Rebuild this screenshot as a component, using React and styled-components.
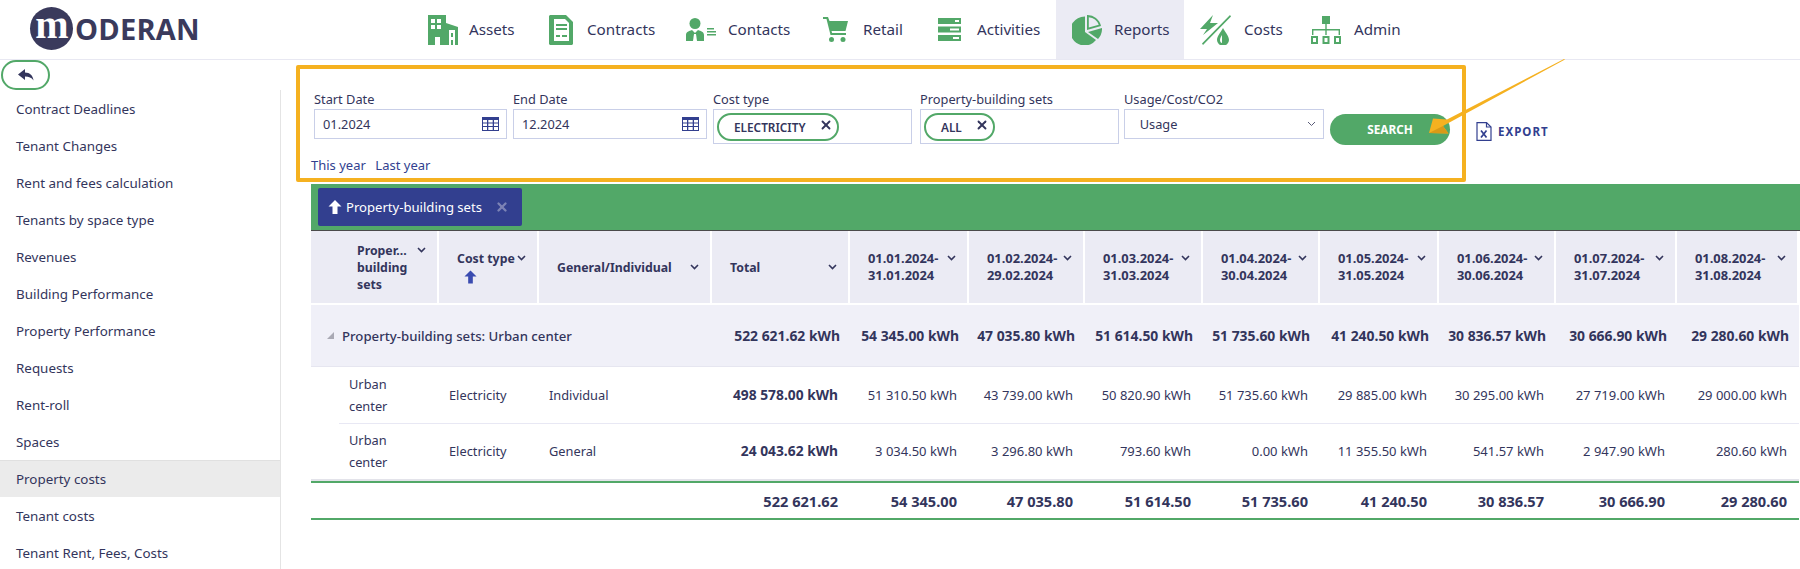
import React from "react";
import styled, { createGlobalStyle } from "styled-components";
import { X } from "lucide-react";

const INK = "#33355c";
const GREEN = "#52a868";
const INDIGO = "#323f8f";
const ORANGE = "#f5b120";
const LINE = "#c9cfe8";
const TRACKS = "28px 100px 100px 173px 138px 119px 116px 118px 117px 119px 117px 121px 122px";

const Global = createGlobalStyle`
  html, body { margin: 0; padding: 0; background: #fff; }
  body { font-family: "Noto Sans", "Open Sans", sans-serif; color: ${INK}; font-size: 13px; }
  * { box-sizing: border-box; }
`;

const Page = styled.div`
  position: relative;
  width: 1800px;
  height: 569px;
  overflow: hidden;
`;

/* header */
const Header = styled.header`
  display: flex;
  height: 60px;
  border-bottom: 1px solid #e8e8f2;
`;
const Brand = styled.div`
  width: 412px;
  display: flex;
  align-items: flex-start;
  padding: 7px 0 0 30px;
`;
const BrandMark = styled.span`
  width: 43px;
  height: 43px;
  border-radius: 50%;
  background: #3a3a5c;
  color: #fff;
  font: 700 40px/36px "Liberation Serif", serif;
  display: flex;
  justify-content: center;
  letter-spacing: -1px;
`;
const BrandWord = styled.span`
  font: 700 29px/43px "Open Sans", sans-serif;
  color: #3a3a5c;
  margin-left: 2px;
  letter-spacing: 0.2px;
`;
const Nav = styled.nav`
  display: flex;
`;
const NavItem = styled.a`
  width: ${(p) => p.$width}px;
  display: flex;
  align-items: center;
  padding-left: 16px;
  font-size: 15.2px;
  background: ${(p) => (p.$active ? "#ebebf4" : "transparent")};
  & > span { margin-bottom: 2px; }
`;
const NavIcon = styled.svg`
  display: block;
  flex: none;
  margin-right: ${(p) => p.$gap}px;
  fill: ${GREEN};
`;

/* sidebar */
const Body = styled.div`
  display: flex;
  height: 509px;
`;
const Sidebar = styled.aside`
  width: 281px;
  flex: none;
  overflow: hidden;
`;
const BackButton = styled.button`
  display: flex;
  align-items: center;
  justify-content: center;
  width: 49px;
  height: 30px;
  margin-left: 1px;
  padding: 0;
  background: #fff;
  border: 2px solid ${GREEN};
  border-radius: 15px;
`;
const SideList = styled.ul`
  list-style: none;
  margin: 0;
  padding: 0;
  border-right: 1px solid #e4e4e4;
`;
const SideItem = styled.li`
  height: 37px;
  line-height: 38px;
  padding-left: 16px;
  font-size: 13.4px;
  background: ${(p) => (p.$active ? "#ebebeb" : "transparent")};
  box-shadow: ${(p) => (p.$active ? "inset 0 1px 0 #e0e0e0" : "none")};
`;

/* filters */
const Content = styled.main`
  flex: 1;
  min-width: 0;
`;
const TopRow = styled.div`
  display: flex;
  align-items: flex-start;
  margin: 5px 0 0 15px;
`;
const FilterPanel = styled.section`
  width: 1170px;
  height: 117px;
  border: 4px solid ${ORANGE};
  border-radius: 2px;
  padding: 22px 0 0 11px;
`;
const Fields = styled.div`
  display: flex;
  align-items: flex-start;
  margin-left: 3px;
`;
const Field = styled.div`
  width: ${(p) => p.$width}px;
  margin-right: ${(p) => p.$gap}px;
`;
const Label = styled.label`
  display: block;
  height: 17.5px;
  line-height: 17px;
  font-size: 12.8px;
  white-space: nowrap;
`;
const InputBox = styled.div`
  height: ${(p) => p.$height}px;
  border: 1px solid ${LINE};
  display: flex;
  align-items: ${(p) => (p.$top ? "flex-start" : "center")};
  justify-content: space-between;
  padding: ${(p) => (p.$top ? "3px" : "0 7px 0 8px")};
  font-size: 12.8px;
`;
const Chip = styled.span`
  height: 28px;
  width: ${(p) => p.$width}px;
  border: 2px solid ${GREEN};
  border-radius: 14px;
  display: inline-flex;
  align-items: center;
  justify-content: space-between;
  padding: 0 4px 0 15px;
  font-size: 11.8px;
  font-weight: 600;
  & svg { margin-bottom: 4px; }
`;
const SearchButton = styled.button`
  width: 120px;
  height: 31px;
  margin-top: 22.5px;
  border: 0;
  border-radius: 16px;
  background: ${GREEN};
  color: #fff;
  font: 700 11.8px "Noto Sans", sans-serif;
  padding: 0;
`;
const QuickLinks = styled.div`
  display: flex;
  gap: 9.500px;
  margin-top: 12px;
  line-height: 17px;
  font-size: 13px;
  color: ${INDIGO};
`;
const Export = styled.a`
  display: flex;
  align-items: center;
  gap: 6px;
  margin: 57px 0 0 10px;
  font-size: 11.5px;
  font-weight: 700;
  letter-spacing: 1px;
  color: ${INDIGO};
`;

/* grouping bar */
const GroupBar = styled.div`
  margin: 2px 0 0 30px;
  height: 46px;
  background: ${GREEN};
  padding: 4px 7px;
`;
const GroupTag = styled.div`
  width: 204px;
  height: 38px;
  background: ${INDIGO};
  border-radius: 2px;
  display: flex;
  align-items: center;
  padding-left: 10px;
  color: #fff;
  font-size: 13.1px;
  & b { margin-left: 13px; color: #7c83b5; display: flex; }
  & span { margin-left: 4px; }
`;

/* table */
const Table = styled.div`
  margin-left: 30px;
  border-top: 1px solid #4a4a4a;
`;
const Row = styled.div`
  display: grid;
  grid-template-columns: ${TRACKS};
  height: ${(p) => p.$height}px;
  padding-bottom: ${(p) => p.$lift ?? 0}px;
`;
const HeadCell = styled.div`
  background: #ebebf4;
  border-right: 2px solid #fff;
  border-bottom: 2px solid #fff;
  padding: 0 11px 0 18px;
  display: flex;
  align-items: center;
  font-weight: 700;
  font-size: 12.3px;
  line-height: 17px;
`;
const HeadInner = styled.div`
  flex: 1;
  display: flex;
  justify-content: space-between;
  align-items: flex-start;
`;
const DateText = styled.div`
  font-size: 12.9px;
`;
const Chevron = styled.svg`
  flex: none;
  margin-top: 5px;
  margin-left: -20px;
`;
const SortArrow = styled.svg`
  display: block;
  margin: 3px 0 0 7px;
`;
const GroupRow = styled(Row)`
  background: #f0f0f8;
  border-bottom: 1px solid #e6e6f0;
  font-weight: 700;
  margin-right: 1px;
  font-size: 13.9px;
`;
const GroupTitle = styled.div`
  grid-column: span 4;
  display: flex;
  align-items: center;
  font-weight: 500;
  padding-left: 16px;
  gap: 8px;
  font-size: 13.2px;
`;
const GroupValue = styled.div`
  display: flex;
  align-items: center;
  justify-content: flex-end;
  padding-right: 10px;
  white-space: nowrap;
`;
const Cell = styled.div`
  display: flex;
  align-items: center;
  justify-content: ${(p) => (p.$right ? "flex-end" : "flex-start")};
  padding: ${(p) => (p.$right ? "0 12px 0 0" : "0 0 0 10px")};
  border-bottom: ${(p) => (p.$line ? "1px solid #e8e8f4" : "0")};
  font-weight: ${(p) => (p.$bold ? 700 : 400)};
  white-space: nowrap;
  font-size: ${(p) => (p.$bold ? "13.8px" : p.$right ? "13px" : "12.8px")};
  line-height: 22px;
`;
const Spacer = styled.div``;
const FootRow = styled(Row)`
  border-top: 2px solid ${GREEN};
  border-bottom: 2px solid ${GREEN};
  box-shadow: 0 -2px 0 #e3e3ea;
  font-weight: 700;
  font-size: 14.6px;
  margin-right: 1px;
`;
const FootValue = styled.div`
  display: flex;
  align-items: center;
  justify-content: flex-end;
  padding-right: 12px;
`;

const ArrowOverlay = styled.svg`
  position: absolute;
  left: 1420px;
  top: 50px;
  pointer-events: none;
`;

/* icons */
const AssetsIcon = () => (
  <NavIcon $gap={11} width="30" height="30" viewBox="0 0 30 30">
    <path d="M0 0h18v8l12 4v18H0z" />
    <path fill="#fff" d="M3 4h4v4H3zM9 4h4v4H9zM3 10h4v4H3zM9 10h4v4H9zM7 22h5v8H7zM21 15h6v15h-2v-5h-2v5h-2zM23 18v4h2v-4z" />
  </NavIcon>
);
const ContractsIcon = () => (
  <NavIcon $gap={14} width="24" height="30" viewBox="0 0 24 30">
    <path d="M1 0h16l7 7v22l-1 1H1l-1-1V1z" />
    <path fill="#fff" d="M5 4h11l4 4v18H5z" />
    <path d="M7 9h11v2H7zM7 13h11v2H7zM7 20h4v2H7zM13 20h5v2h-5z" />
  </NavIcon>
);
const ContactsIcon = () => (
  <NavIcon $gap={12} width="30" height="24" viewBox="0 0 30 24">
    <circle cx="9" cy="5.5" r="5.5" />
    <path d="M0 23v-6c0-3 3-4 6-5l3 3 3-3c3 1 6 2 6 5v6z" />
    <path fill="#fff" d="M8 16h2l1 7H7z" />
    <path d="M21 10h7v1.6h-7zM21 13h9v1.6h-9zM21 16h9v1.6h-9z" />
  </NavIcon>
);
const RetailIcon = () => (
  <NavIcon $gap={15} width="25" height="25" viewBox="0 0 25 25">
    <path d="M0 0h5l1.500 4H25l-2.500 10H8.500l.6 2H23v2H7.500L3.500 2H0z" />
    <circle cx="8.500" cy="22.500" r="2.500" />
    <circle cx="20" cy="22.500" r="2.500" />
  </NavIcon>
);
const ActivitiesIcon = () => (
  <NavIcon $gap={16} width="23" height="23" viewBox="0 0 23 23">
    <path d="M0 0h23v6H0zM0 8.500h23v6H0zM0 17h23v6H0z" />
    <path fill="#fff" d="M17 2h4v2h-4zM12 10.500h9v2h-9zM15 19h6v2h-6z" />
  </NavIcon>
);
const ReportsIcon = () => (
  <NavIcon $gap={12} width="30" height="30" viewBox="0 0 30 30">
    <path d="M13 1.500A14.500 14.500 0 1 0 24 25L13 17z" />
    <path d="M15 0a14 14 0 0 1 14 11l-14 4zM16.800 2.200v10.400l10-2.800a12 12 0 0 0-10-7.600z" fillRule="evenodd" />
    <path d="M16 17l14-4a15 15 0 0 1-4 11z" />
  </NavIcon>
);
const CostsIcon = () => (
  <NavIcon $gap={13} width="31" height="30" viewBox="0 0 31 30">
    <path d="M13 0L0 14h7L3 20l15-12h-8zM30 0l1 1.500L3 30l-1-1.500z" />
    <path d="M23 13c2 4 6 8 6 12a6 5.500 0 0 1-12 0c0-4 4-8 6-12z" />
    <path fill="#fff" d="M20 25c0-2 1-3 2-5v8c-1 0-2-1-2-3z" />
  </NavIcon>
);
const AdminIcon = () => (
  <NavIcon $gap={13} width="30" height="28" viewBox="0 0 30 28">
    <path d="M11 0h8v8h-8zM14.300 8h1.400v5H29v6h-1.400v-4.600H15.700V19h-1.400v-4.600H2.400V19H1v-6h13.300z" />
    <path fillRule="evenodd" d="M0 20h7v8H0zM2 22v4h3v-4zM11.500 20h7v8h-7zM13.500 22v4h3v-4zM23 20h7v8h-7zM25 22v4h3v-4z" />
  </NavIcon>
);

const CalendarIcon = () => (
  <svg width="17" height="14" viewBox="0 0 17 14">
    <rect width="17" height="14" fill="#323f8f" />
    <path fill="#fff" d="M1 3h4v2.500H1zM6.300 3h4.400v2.500H6.300zM12 3h4v2.500h-4zM1 6.500h4V9H1zM6.300 6.500h4.400V9H6.300zM12 6.500h4V9h-4zM1 10h4v3H1zM6.300 10h4.400v3H6.300zM12 10h4v3h-4z" />
  </svg>
);
const Caret = () => (
  <svg width="9" height="6" viewBox="0 0 9 6" fill="none" stroke="#5a5c78" strokeWidth="1">
    <path d="M1 1l3.500 3.500L8 1" />
  </svg>
);
const HeadCaret = () => (
  <Chevron width="9" height="6" viewBox="0 0 9 6" fill="none" stroke="#33355c" strokeWidth="1.600">
    <path d="M1 1l3.500 3.500L8 1" />
  </Chevron>
);

const navItems = [
  { label: "Assets", width: 121, Icon: AssetsIcon },
  { label: "Contracts", width: 137, Icon: ContractsIcon },
  { label: "Contacts", width: 137, Icon: ContactsIcon },
  { label: "Retail", width: 115, Icon: RetailIcon },
  { label: "Activities", width: 134, Icon: ActivitiesIcon },
  { label: "Reports", width: 128, Icon: ReportsIcon, active: true },
  { label: "Costs", width: 111, Icon: CostsIcon },
  { label: "Admin", width: 120, Icon: AdminIcon },
];

const sideItems = [
  "Contract Deadlines", "Tenant Changes", "Rent and fees calculation", "Tenants by space type",
  "Revenues", "Building Performance", "Property Performance", "Requests", "Rent-roll", "Spaces",
  "Property costs", "Tenant costs", "Tenant Rent, Fees, Costs",
];

const periods = [
  ["01.01.2024-", "31.01.2024"], ["01.02.2024-", "29.02.2024"], ["01.03.2024-", "31.03.2024"],
  ["01.04.2024-", "30.04.2024"], ["01.05.2024-", "31.05.2024"], ["01.06.2024-", "30.06.2024"],
  ["01.07.2024-", "31.07.2024"], ["01.08.2024-", "31.08.2024"],
];

const totals = ["522 621.62", "54 345.00", "47 035.80", "51 614.50", "51 735.60", "41 240.50", "30 836.57", "30 666.90", "29 280.60"];

const rows = [
  { kind: "Individual", line: true, lift: 0, values: ["498 578.00", "51 310.50", "43 739.00", "50 820.90", "51 735.60", "29 885.00", "30 295.00", "27 719.00", "29 000.00"] },
  { kind: "General", line: false, lift: 4, values: ["24 043.62", "3 034.50", "3 296.80", "793.60", "0.00", "11 355.50", "541.57", "2 947.90", "280.60"] },
];

export default function App() {
  return (
    <Page>
      <Global />
      <Header>
        <Brand>
          <BrandMark>m</BrandMark>
          <BrandWord>ODERAN</BrandWord>
        </Brand>
        <Nav>
          {navItems.map(({ label, width, Icon, active }) => (
            <NavItem key={label} $width={width} $active={active}>
              <Icon />
              <span>{label}</span>
            </NavItem>
          ))}
        </Nav>
      </Header>
      <Body>
        <Sidebar>
          <BackButton aria-label="Back">
            <svg width="16" height="12" viewBox="0 0 16 12" fill="#33355c">
              <path d="M7 0L0 5.500 7 11V7.500c4 0 6.500 1 8.500 4C15 6.500 12 3.500 7 3.500z" />
            </svg>
          </BackButton>
          <SideList>
            {sideItems.map((s) => (
              <SideItem key={s} $active={s === "Property costs"}>{s}</SideItem>
            ))}
          </SideList>
        </Sidebar>
        <Content>
          <TopRow>
            <FilterPanel>
              <Fields>
                <Field $width={193} $gap={6}>
                  <Label>Start Date</Label>
                  <InputBox $height={30}>01.2024<CalendarIcon /></InputBox>
                </Field>
                <Field $width={194} $gap={6}>
                  <Label>End Date</Label>
                  <InputBox $height={30}>12.2024<CalendarIcon /></InputBox>
                </Field>
                <Field $width={199} $gap={8}>
                  <Label>Cost type</Label>
                  <InputBox $height={35} $top>
                    <Chip $width={122}>ELECTRICITY<X size={14} strokeWidth={3.2} /></Chip>
                  </InputBox>
                </Field>
                <Field $width={199} $gap={5}>
                  <Label>Property-building sets</Label>
                  <InputBox $height={35} $top>
                    <Chip $width={71}>ALL<X size={14} strokeWidth={3.2} /></Chip>
                  </InputBox>
                </Field>
                <Field $width={200} $gap={6}>
                  <Label>Usage/Cost/CO2</Label>
                  <InputBox $height={30}>&nbsp;&nbsp;Usage<Caret /></InputBox>
                </Field>
                <SearchButton>SEARCH</SearchButton>
              </Fields>
              <QuickLinks>
                <span>This year</span>
                <span>Last year</span>
              </QuickLinks>
            </FilterPanel>
            <Export>
              <svg width="16" height="19" viewBox="0 0 16 19" fill="none" stroke="#323f8f" strokeWidth="1.200">
                <path d="M1 .6h9.500L15 5v13.400H1z" />
                <path d="M10.500.6V5H15" />
                <path d="M5 8.500l5.500 7M10.500 8.500L5 15.500" strokeWidth="1.700" />
              </svg>
              EXPORT
            </Export>
          </TopRow>
          <GroupBar>
            <GroupTag>
              <svg width="14" height="14" viewBox="0 0 14 14" fill="#fff">
                <path d="M7 0l6.500 6.500H9.500V14h-5V6.500H.5z" />
              </svg>
              <span>Property-building sets</span>
              <b><X size={14} strokeWidth={4} /></b>
            </GroupTag>
          </GroupBar>
          <Table>
            <Row $height={74}>
              <HeadCell />
              <HeadCell>
                <HeadInner>
                  <div>Proper...<br />building<br />sets</div>
                  <HeadCaret />
                </HeadInner>
              </HeadCell>
              <HeadCell>
                <HeadInner>
                  <div>
                    Cost type
                    <SortArrow width="13" height="14" viewBox="0 0 14 14" fill="#3a4bb0">
                      <path d="M7 0l6.500 6.500H9.500V14h-5V6.500H.5z" />
                    </SortArrow>
                  </div>
                  <HeadCaret />
                </HeadInner>
              </HeadCell>
              <HeadCell>
                <HeadInner>
                  <div>General/Individual</div>
                  <HeadCaret />
                </HeadInner>
              </HeadCell>
              <HeadCell>
                <HeadInner>
                  <div>Total</div>
                  <HeadCaret />
                </HeadInner>
              </HeadCell>
              {periods.map(([a, b]) => (
                <HeadCell key={a}>
                  <HeadInner>
                    <DateText>{a}<br />{b}</DateText>
                    <HeadCaret />
                  </HeadInner>
                </HeadCell>
              ))}
            </Row>
            <GroupRow $height={62}>
              <GroupTitle>
                <svg width="7" height="7" viewBox="0 0 7 7" fill="#a9a9b4"><path d="M7 0v7H0z" /></svg>
                Property-building sets: Urban center
              </GroupTitle>
              {totals.map((t) => (
                <GroupValue key={t}>{t} kWh</GroupValue>
              ))}
            </GroupRow>
            {rows.map((r) => (
              <Row key={r.kind} $height={57} $lift={r.lift}>
                <Spacer />
                <Cell $line={r.line}><span>Urban<br />center</span></Cell>
                <Cell $line={r.line}>Electricity</Cell>
                <Cell $line={r.line}>{r.kind}</Cell>
                {r.values.map((v, i) => (
                  <Cell key={i} $right $line={r.line} $bold={i === 0}>{v} kWh</Cell>
                ))}
              </Row>
            ))}
            <FootRow $height={39}>
              <Spacer />
              <Spacer />
              <Spacer />
              <Spacer />
              {totals.map((t) => (
                <FootValue key={t}>{t}</FootValue>
              ))}
            </FootRow>
          </Table>
        </Content>
      </Body>
      <ArrowOverlay width="150" height="90" viewBox="1420 50 150 90">
        <path fill={ORANGE} d="M1565 59.500L1564 59 1447 119.500l-14-1 -4 14.500 19.500 .5-5.500-7.500z" />
        <path fill="#d99a17" d="M1429 133l19.500.5-5.500-7.500z" />
      </ArrowOverlay>
    </Page>
  );
}
